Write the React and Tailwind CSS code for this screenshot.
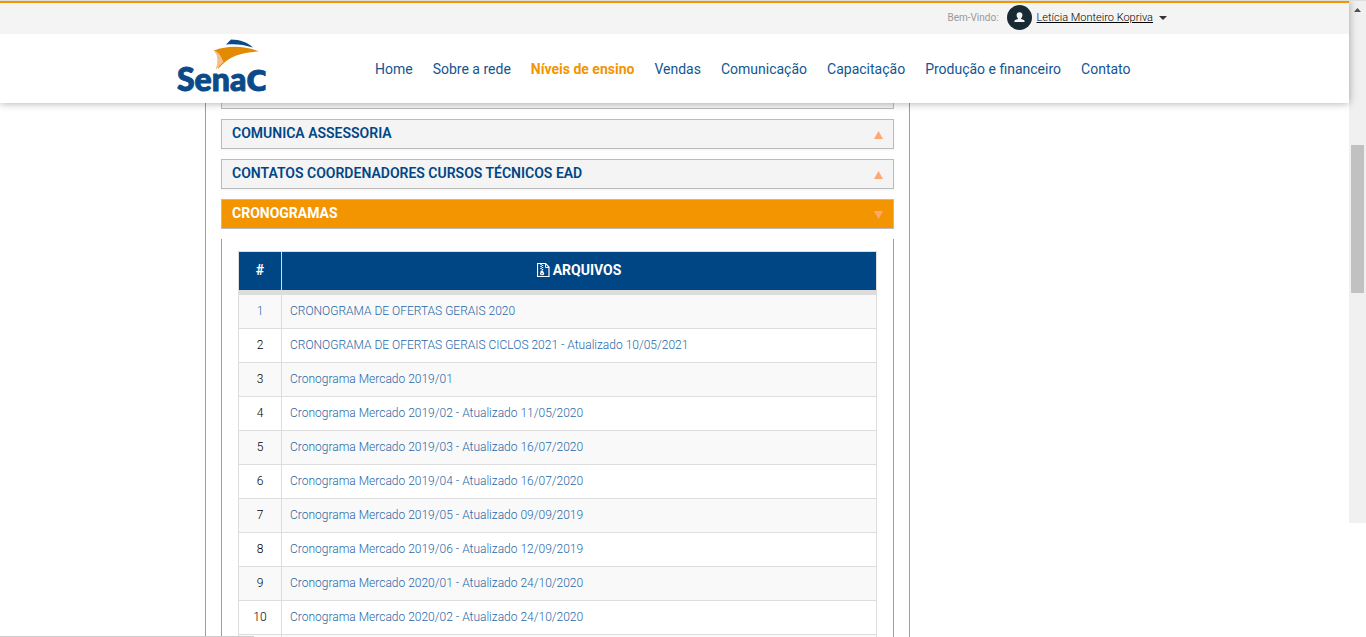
import React from "react";

const navItems = [
  "Home",
  "Sobre a rede",
  "Níveis de ensino",
  "Vendas",
  "Comunicação",
  "Capacitação",
  "Produção e financeiro",
  "Contato",
];

const files = [
  "CRONOGRAMA DE OFERTAS GERAIS 2020",
  "CRONOGRAMA DE OFERTAS GERAIS CICLOS 2021 - Atualizado 10/05/2021",
  "Cronograma Mercado 2019/01",
  "Cronograma Mercado 2019/02 - Atualizado 11/05/2020",
  "Cronograma Mercado 2019/03 - Atualizado 16/07/2020",
  "Cronograma Mercado 2019/04 - Atualizado 16/07/2020",
  "Cronograma Mercado 2019/05 - Atualizado 09/09/2019",
  "Cronograma Mercado 2019/06 - Atualizado 12/09/2019",
  "Cronograma Mercado 2020/01 - Atualizado 24/10/2020",
  "Cronograma Mercado 2020/02 - Atualizado 24/10/2020",
];

function Logo() {
  return (
    <svg width="92" height="64" viewBox="0 0 92 64" className="overflow-visible" role="img" aria-label="Senac">
      <path d="M38 12.5C52 7 70 8 83 13.5C68 14 53 17 42 31C44 22 43 17 38 12.5Z" fill="#e38a05" />
      <path d="M38 12.5C36.500 12 35 12 38 12.500Q43 13 47.500 24Q43 28 39.500 32Q44 20 38 12.500Z" fill="#f6bf85" />
      <path d="M50 6.500L55 1.500C64 1.500 72 4.500 77 9.500C68 6.500 59 5.500 50 6.500Z" fill="#0b4a89" />
      <text
        x="1"
        y="53"
        className="fill-[#0b4a89] stroke-[#0b4a89] stroke-1 font-['Lato'] text-[32px] font-black"
        strokeLinejoin="round"
      >
        Sena
        <tspan className="font-['DejaVu_Sans'] text-[28px] font-bold">C</tspan>
      </text>
    </svg>
  );
}

function Avatar() {
  return (
    <svg width="25" height="25" viewBox="0 0 25 25" aria-hidden="true">
      <circle cx="12.500" cy="12.500" r="12.500" fill="#182a33" />
      <path d="M12.500 7.200a2.900 2.900 0 0 1 2.900 3c0 1.300-.6 2.300-1.300 2.900v.8l2.700 1.200c.6.300.8.800.8 1.900h-10.200c0-1.100.2-1.600.8-1.900l2.700-1.200v-.8c-.7-.6-1.300-1.600-1.300-2.900a2.900 2.900 0 0 1 2.900-3Z" fill="#f4f4f4" />
    </svg>
  );
}

function ZipIcon() {
  return (
    <svg width="13" height="14" viewBox="0 0 13 14" fill="none" stroke="#fff" aria-hidden="true">
      <path d="M.5.5H8.500L12 4V13.500H.5Z" strokeWidth="1.200" />
      <path d="M8.500.5V4.500H12" />
      <path d="M4 1v1M5.500 2v1M4 3v1M5.500 4v1M4 5v1M5.500 6v1" strokeWidth="1.500" />
      <path d="M3.800 7.500H5.800L7.300 10.800Q7 12.300 5 12.300Q3 12.300 3 10.800Z" fill="#fff" stroke="none" />
      <path d="M4.300 10.700h1.500" stroke="#004685" strokeWidth="0.900" />
    </svg>
  );
}

function Panel({ title, open = false }) {
  return (
    <button
      type="button"
      aria-expanded={open}
      className={
        open
          ? "flex h-[30px] w-full items-center justify-between border border-[#bbb] bg-[#f39500] px-2.5 text-left text-sm font-bold text-white"
          : "flex h-[30px] w-full items-center justify-between border border-[#bbb] bg-[#f4f4f4] px-2.5 text-left text-sm font-semibold text-[#004685] shadow-xs"
      }
    >
      <span className="pb-0.5">{title}</span>
      <svg width="9" height="8" viewBox="0 0 9 8" className="mt-0.5" aria-hidden="true">
        <path d={open ? "M0 0H9L4.500 8Z" : "M0 8H9L4.500 0Z"} fill="#ffa873" />
      </svg>
    </button>
  );
}

function FilesTable() {
  return (
    <table className="w-full table-fixed border-separate border-spacing-0 border-t border-l border-[#ddd] text-xs">
      <colgroup>
        <col className="w-[43px]" />
        <col />
      </colgroup>
      <thead>
        <tr className="h-[43px] bg-[#004685] text-sm text-white">
          <th className="border-r border-b-[5px] border-[#ddd] px-0 pt-0 pb-0.5 font-bold">#</th>
          <th className="border-r border-b-[5px] border-[#ddd] px-0 pt-0 pb-0.5 font-bold">
            <span className="flex items-center justify-center gap-[3px]">
              <ZipIcon />
              ARQUIVOS
            </span>
          </th>
        </tr>
      </thead>
      <tbody>
        {files.map((name, i) => (
          <tr key={name} className="h-[34px] odd:bg-[#f9f9f9]">
            <td
              className={
                i === 0
                  ? "border-r border-b border-[#ddd] px-0 pt-0 pb-0.5 text-center font-light text-[#1f68a8]"
                  : "border-r border-b border-[#ddd] px-0 pt-0 pb-0.5 text-center font-light text-black"
              }
            >
              {i + 1}
            </td>
            <td className="border-r border-b border-[#ddd] px-2 pt-0 pb-0.5 font-light">
              <a href="#arquivo" className="text-[#1f68a8]">
                {name}
              </a>
            </td>
          </tr>
        ))}
        <tr className="h-[34px] odd:bg-[#f9f9f9]">
          <td className="border-r border-[#ddd]" />
          <td className="border-r border-[#ddd]" />
        </tr>
      </tbody>
    </table>
  );
}

export default function App() {
  return (
    <div className="relative flex h-screen flex-col overflow-hidden border-t border-[#ddd] bg-white font-['Roboto',sans-serif]">
      <div className="flex min-h-0 flex-1">
        <div className="flex min-w-0 flex-1 flex-col">
          <header className="relative z-10 shrink-0 bg-white shadow-[0_0_8px_rgba(0,0,0,0.35)]">
            <div className="flex h-[33px] items-center justify-end border-t-2 border-[#f39500] bg-[#f4f4f4] pr-[182px]">
              <span className="mr-2 pb-0.5 text-[10px] text-[#999]">Bem-Vindo:</span>
              <button type="button" className="flex items-center pb-0.5">
                <Avatar />
                <span className="ml-[5px] pt-0.5 text-[11px] font-light text-black underline">
                  Letícia Monteiro Kopriva
                </span>
                <svg width="8" height="4" viewBox="0 0 8 4" className="ml-1.5" aria-hidden="true">
                  <path d="M0 0H8L4 4Z" fill="#333" />
                </svg>
              </button>
            </div>
            <div className="flex h-[69px] items-start pl-[176px]">
              <a href="#inicio" className="mt-1">
                <Logo />
              </a>
              <nav className="mt-[25px] ml-[107px] flex gap-5 text-sm whitespace-nowrap text-[#14558f]">
                {navItems.map((item) => (
                  <a
                    key={item}
                    href="#menu"
                    className={item === "Níveis de ensino" ? "font-bold text-[#f39500]" : ""}
                  >
                    {item}
                  </a>
                ))}
              </nav>
            </div>
          </header>
          <main className="ml-[205px] min-h-0 w-[705px] max-w-full flex-1 overflow-hidden border-x border-[#e6930f] px-[15px]">
            <div className="h-1.5 border-x border-b border-[#bbb] bg-[#f4f4f4]" />
            <div className="mt-2.5 flex flex-col gap-2.5">
              <Panel title="COMUNICA ASSESSORIA" />
              <Panel title="CONTATOS COORDENADORES CURSOS TÉCNICOS EAD" />
              <Panel title="CRONOGRAMAS" open />
              <section className="border-x border-[#e6930f] px-4 pt-3">
                <FilesTable />
              </section>
            </div>
          </main>
        </div>
        <div className="h-[522px] w-[17px] shrink-0 bg-[#f0f0f0] px-0.5" aria-hidden="true">
          <svg width="7" height="4" viewBox="0 0 7 4" className="mx-auto mt-[7px]">
            <path d="M0 4H7L3.500 0Z" fill="#505050" />
          </svg>
          <div className="mt-[133px] h-[148px] bg-[#c1c1c1]" />
        </div>
      </div>
      <div className="absolute bottom-0 left-0 h-px w-[254px] bg-[#ccc]" />
    </div>
  );
}
